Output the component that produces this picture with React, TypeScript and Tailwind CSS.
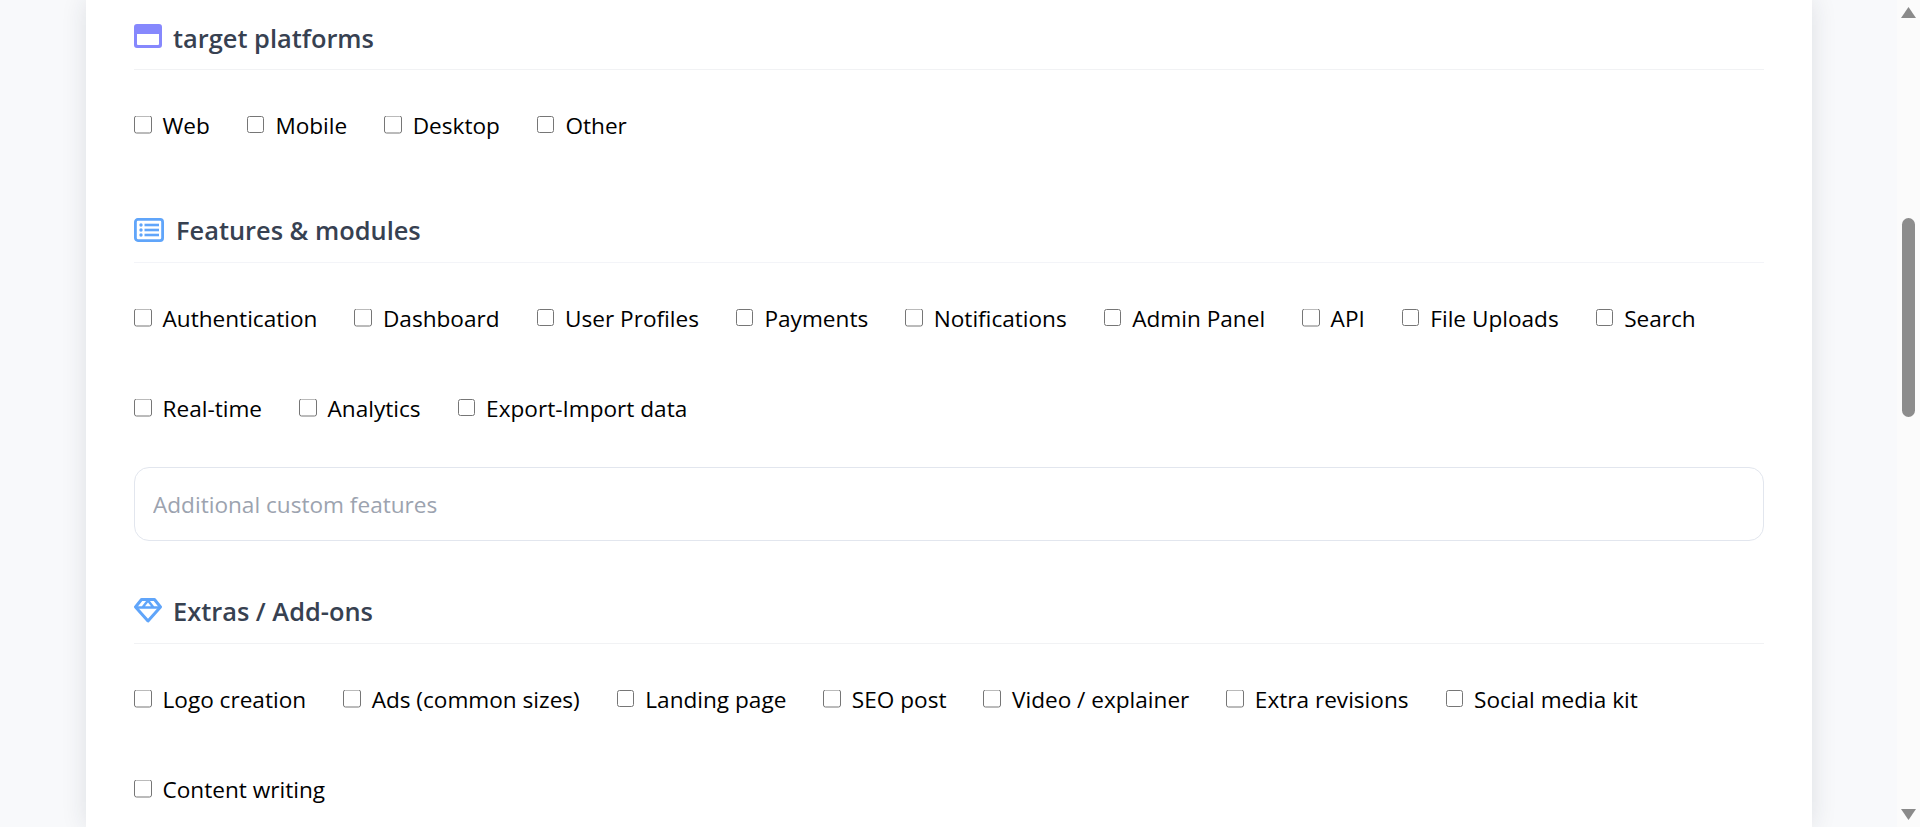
import React from "react";

const font = "font-['Open_Sans','Noto_Sans',sans-serif]";

function Check({ label }: { label: string }) {
  return (
    <label className="flex items-center gap-[11px] text-[22.6px] leading-[28px] text-black">
      <input type="checkbox" className="w-[17.5px] h-[17.5px] m-0 -translate-y-[1.5px]" />
      <span className="-translate-y-[0.5px]">{label}</span>
    </label>
  );
}

function Heading({ icon, title, gap }: { icon: React.ReactNode; title: string; gap: string }) {
  return (
    <div className={`flex items-center ${gap} h-[32px] text-[25.4px] font-semibold text-[#374151]`}>
      {icon}
      <span>{title}</span>
    </div>
  );
}

function Rows({ items }: { items: string[] }) {
  return (
    <div className="flex flex-wrap gap-x-[37px] gap-y-[62px]">
      {items.map((i) => (
        <Check key={i} label={i} />
      ))}
    </div>
  );
}

const WindowIcon = (
  <svg width="28" height="24" viewBox="0 0 28 24" className="shrink-0 -translate-y-[2px]">
    <path fill="#8688fd" fillRule="evenodd" d="M3 0h22a3 3 0 0 1 3 3v18a3 3 0 0 1-3 3H3a3 3 0 0 1-3-3V3a3 3 0 0 1 3-3Zm0 10v10a1 1 0 0 0 1 1h20a1 1 0 0 0 1-1V10Z" />
  </svg>
);

const ListIcon = (
  <svg width="30" height="24" viewBox="0 0 30 24" className="shrink-0">
    <rect x="1.4" y="1.4" width="27.2" height="21.2" rx="2.5" fill="none" stroke="#60a5fa" strokeWidth="2.8" />
    <circle cx="7" cy="7" r="1.7" fill="#60a5fa" />
    <circle cx="7" cy="12" r="1.7" fill="#60a5fa" />
    <circle cx="7" cy="17" r="1.7" fill="#60a5fa" />
    <rect x="10.5" y="5.7" width="14.5" height="2.6" fill="#60a5fa" />
    <rect x="10.5" y="10.7" width="14.5" height="2.6" fill="#60a5fa" />
    <rect x="10.5" y="15.7" width="14.5" height="2.6" fill="#60a5fa" />
  </svg>
);

const GemIcon = (
  <svg width="28" height="25" viewBox="0 0 28 25" className="shrink-0 -translate-y-[1px]">
    <path fill="none" stroke="#60a5fa" strokeWidth="3" strokeLinejoin="round" d="M7.500 1.500h13l6 7.500L14 23 1.500 9Z" />
    <path fill="none" stroke="#60a5fa" strokeWidth="2.4" d="M2 9.500h24M8.500 9.500l5.500-7 5.500 7" />
  </svg>
);

export default function App() {
  return (
    <div className={`${font} h-[827px] overflow-hidden flex bg-[#f8f9fb]`}>
      <div className="flex-1 min-w-0 pl-[86px] pr-[85px]">
        <main className="h-[827px] bg-white px-[48px] pt-[22px] shadow-[0_0_24px_rgba(30,41,59,0.12)]">
          <Heading icon={WindowIcon} title="target platforms" gap="gap-[11px]" />
          <hr className="mt-[15px] border-t border-[#f1f2f4]" />
          <div className="mt-[42px]">
            <Rows items={["Web", "Mobile", "Desktop", "Other"]} />
          </div>

          <div className="mt-[74px]">
            <Heading icon={ListIcon} title="Features & modules" gap="gap-[12px]" />
          </div>
          <hr className="mt-[16px] border-t border-[#f3f4f8]" />
          <div className="mt-[42px]">
            <Rows
              items={[
                "Authentication",
                "Dashboard",
                "User Profiles",
                "Payments",
                "Notifications",
                "Admin Panel",
                "API",
                "File Uploads",
                "Search",
                "Real-time",
                "Analytics",
                "Export-Import data",
              ]}
            />
          </div>
          <input
            placeholder="Additional custom features"
            className="mt-[44px] block w-full h-[74px] px-[18px] rounded-[15px] border border-[#e2e6ee] text-[22.6px] placeholder:text-[#9ca3af] outline-none"
          />

          <div className="mt-[54px]">
            <Heading icon={GemIcon} title="Extras / Add-ons" gap="gap-[11px]" />
          </div>
          <hr className="mt-[16px] border-t border-[#f1f2f4]" />
          <div className="mt-[42px]">
            <Rows
              items={[
                "Logo creation",
                "Ads (common sizes)",
                "Landing page",
                "SEO post",
                "Video / explainer",
                "Extra revisions",
                "Social media kit",
                "Content writing",
              ]}
            />
          </div>
        </main>
      </div>
      <aside className="w-[23px] shrink-0 bg-[#fbfbfb] flex flex-col items-center">
        <svg width="15" height="11" viewBox="0 0 15 11" className="mt-[7px] shrink-0">
          <path d="M7.500 0L15 11H0Z" fill="#8a8a8a" />
        </svg>
        <div className="w-[13px] h-[199px] mt-[200px] rounded-full bg-[#8c8c8c]" />
        <svg width="15" height="11" viewBox="0 0 15 11" className="mt-auto mb-[7px] shrink-0">
          <path d="M7.500 11L15 0H0Z" fill="#8a8a8a" />
        </svg>
      </aside>
    </div>
  );
}
